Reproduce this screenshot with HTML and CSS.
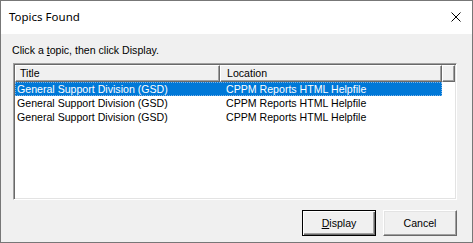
FILE: index.html
```html
<!DOCTYPE html>
<html lang="en">
<head>
    <meta charset="UTF-8">
    <title>Topics Found</title>
    <link rel="stylesheet" href="styles.css">
</head>
<body>
    <div class="dialog">
        <div class="titlebar">
            <span class="title">Topics Found</span>
            <svg class="close" width="10" height="10" viewBox="0 0 10 10">
                <path d="M0.5 0.5 L9.5 9.5 M9.5 0.5 L0.5 9.5" stroke="#000" stroke-width="1" fill="none"/>
            </svg>
        </div>
        <div class="content">
            <div class="hint">Click a <u>t</u>opic, then click Display.</div>
            <div class="listbox">
                <div class="header">
                    <div class="hcell col-title">Title</div>
                    <div class="hcell col-loc">Location</div>
                    <div class="hcell col-fill"></div>
                </div>
                <div class="row selected">
                    <div class="cell col-title">General Support Division (GSD)</div>
                    <div class="cell col-loc">CPPM Reports HTML Helpfile</div>
                </div>
                <div class="row">
                    <div class="cell col-title">General Support Division (GSD)</div>
                    <div class="cell col-loc">CPPM Reports HTML Helpfile</div>
                </div>
                <div class="row">
                    <div class="cell col-title">General Support Division (GSD)</div>
                    <div class="cell col-loc">CPPM Reports HTML Helpfile</div>
                </div>
            </div>
            <div class="buttons">
                <button class="btn default"><u>D</u>isplay</button>
                <button class="btn">Cancel</button>
            </div>
        </div>
    </div>
</body>
</html>
```

FILE: styles.css
```css
body {
    margin: 0;
    padding: 0;
    background-color: #f0f0f0;
    font-family: "Liberation Sans", Arial, sans-serif;
    font-size: 10.6px;
}
.dialog {
    box-sizing: border-box;
    width: 473px;
    height: 243px;
    border: 1px solid #777;
    background: #f0f0f0;
    display: flex;
    flex-direction: column;
}
.titlebar {
    height: 31px;
    background: #fff;
    display: flex;
    align-items: center;
    justify-content: space-between;
    padding: 0 10px 2px 8px;
}
.title {
    font-family: "Noto Sans", "Open Sans", sans-serif;
    font-size: 11.5px;
    color: #000;
}
.close {
    margin-right: 1px;
}
.content {
    flex: 1;
    padding: 10px 15px 0 12px;
    display: flex;
    flex-direction: column;
}
.hint {
    height: 13px;
    line-height: 13px;
    margin-left: -1px;
    color: #000;
}
.listbox {
    margin-top: 6px;
    height: 137px;
    box-sizing: border-box;
    background: #fff;
    border-top: 1px solid #a0a0a0;
    border-left: 1px solid #a0a0a0;
    border-right: 1px solid #fff;
    border-bottom: 1px solid #fff;
    box-shadow: inset 1px 1px 0 #696969, inset -1px -1px 0 #e3e3e3;
    padding: 1px;
    overflow: hidden;
}
.header {
    display: flex;
    height: 17px;
}
.hcell {
    box-sizing: border-box;
    height: 17px;
    line-height: 15px;
    background: #f0f0f0;
    border-top: 1px solid #fff;
    border-left: 1px solid #fff;
    border-right: 1px solid #696969;
    border-bottom: 1px solid #696969;
    box-shadow: inset -1px -1px 0 #a0a0a0;
    padding-left: 4px;
    white-space: nowrap;
}
.col-title {
    width: 205px;
}
.col-loc {
    width: 222px;
}
.hcell.col-loc {
    padding-left: 6px;
}
.col-fill {
    flex: 1;
}
.row {
    display: flex;
    height: 14px;
    line-height: 14px;
    color: #000;
}
.cell {
    box-sizing: border-box;
    white-space: nowrap;
    overflow: hidden;
}
.cell.col-title {
    padding-left: 2px;
}
.cell.col-loc {
    padding-left: 6px;
}
.row.selected {
    width: 427px;
    background: #0078d7;
    color: #fff;
    outline: 1px dotted #7fb4e6;
    outline-offset: -1px;
}
.buttons {
    margin-top: 10px;
    display: flex;
    justify-content: flex-end;
    gap: 7px;
}
.btn {
    box-sizing: border-box;
    width: 74px;
    height: 26px;
    background: #f0f0f0;
    font-family: "Liberation Sans", Arial, sans-serif;
    font-size: 10.6px;
    color: #000;
    border-top: 1px solid #fff;
    border-left: 1px solid #fff;
    border-right: 1px solid #696969;
    border-bottom: 1px solid #696969;
    box-shadow: inset -1px -1px 0 #a0a0a0, inset 1px 1px 0 #e3e3e3;
    padding: 0;
}
.btn.default {
    border: 1px solid #000;
    box-shadow: inset 1px 1px 0 #fff, inset -1px -1px 0 #696969, inset -2px -2px 0 #a0a0a0;
}
```
